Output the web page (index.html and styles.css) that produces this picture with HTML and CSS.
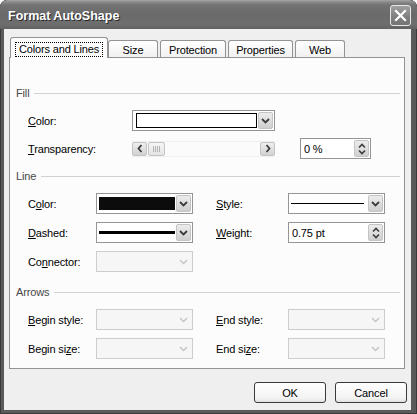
FILE: index.html
```html
<!DOCTYPE html>
<html>
<head>
<meta charset="utf-8">
<title>Format AutoShape</title>
<link rel="stylesheet" href="styles.css">
</head>
<body>
<div class="window">
  <div class="titlebar">
    <span class="title">Format AutoShape</span>
    <span class="close"><svg width="19" height="19" viewBox="0 0 19 19"><path d="M5 5L14 14M14 5L5 14" stroke="#fff" stroke-width="2.2" stroke-linecap="square"/></svg></span>
  </div>
  <div class="frame">
    <div class="client">
      <div class="tabs">
        <div class="tab active w98"><span class="focus">Colors and Lines</span></div>
        <div class="tab w50">Size</div>
        <div class="tab w66">Protection</div>
        <div class="tab w65">Properties</div>
        <div class="tab w50">Web</div>
      </div>
      <div class="panel">
        <div class="group"><span>Fill</span><i class="rule"></i></div>
        <div class="row fill-row first">
          <span class="lbl"><u>C</u>olor:</span>
          <div class="combo">
            <span class="val"><span class="swatch-white"></span></span>
            <span class="dd"><svg width="9" height="6" viewBox="0 0 9 6"><path d="M1 1l3.5 3.5L8 1" fill="none" stroke="#3c3c3c" stroke-width="1.8"/></svg></span>
          </div>
        </div>
        <div class="row fill-row">
          <span class="lbl"><u>T</u>ransparency:</span>
          <div class="scroll">
            <span class="sbtn"><svg width="6" height="9" viewBox="0 0 6 9"><path d="M4.5 1L1.5 4.5L4.5 8" fill="none" stroke="#3c3c3c" stroke-width="1.8"/></svg></span>
            <span class="thumb"><svg width="7" height="6" viewBox="0 0 7 6"><path d="M0.5 0v6M2.5 0v6M4.5 0v6M6.5 0v6" stroke="#b4b4b4" stroke-width="1"/></svg></span>
            <span class="track"></span>
            <span class="sbtn"><svg width="6" height="9" viewBox="0 0 6 9"><path d="M1.5 1L4.5 4.5L1.5 8" fill="none" stroke="#3c3c3c" stroke-width="1.8"/></svg></span>
          </div>
          <span></span>
          <div class="spin">
            <span class="spin-text">0 %</span>
            <span class="spin-btn"><svg width="8" height="12" viewBox="0 0 8 12"><path d="M1 4.5l3-3 3 3M1 7.5l3 3 3-3" fill="none" stroke="#3c3c3c" stroke-width="1.6"/></svg></span>
          </div>
        </div>

        <div class="group line-group"><span>Line</span><i class="rule"></i></div>
        <div class="row line-row first">
          <span class="lbl">C<u>o</u>lor:</span>
          <div class="combo">
            <span class="val"><span class="swatch-black"></span></span>
            <span class="dd"><svg width="9" height="6" viewBox="0 0 9 6"><path d="M1 1l3.5 3.5L8 1" fill="none" stroke="#3c3c3c" stroke-width="1.8"/></svg></span>
          </div>
          <span></span>
          <span class="lbl"><u>S</u>tyle:</span>
          <div class="combo">
            <span class="val line-val"><span class="thin-line"></span></span>
            <span class="dd"><svg width="9" height="6" viewBox="0 0 9 6"><path d="M1 1l3.5 3.5L8 1" fill="none" stroke="#3c3c3c" stroke-width="1.8"/></svg></span>
          </div>
        </div>
        <div class="row line-row">
          <span class="lbl"><u>D</u>ashed:</span>
          <div class="combo">
            <span class="val line-val"><span class="thick-line"></span></span>
            <span class="dd"><svg width="9" height="6" viewBox="0 0 9 6"><path d="M1 1l3.5 3.5L8 1" fill="none" stroke="#3c3c3c" stroke-width="1.8"/></svg></span>
          </div>
          <span></span>
          <span class="lbl"><u>W</u>eight:</span>
          <div class="spin">
            <span class="spin-text">0.75 pt</span>
            <span class="spin-btn"><svg width="8" height="12" viewBox="0 0 8 12"><path d="M1 4.5l3-3 3 3M1 7.5l3 3 3-3" fill="none" stroke="#3c3c3c" stroke-width="1.6"/></svg></span>
          </div>
        </div>
        <div class="row line-row">
          <span class="lbl">Co<u>n</u>nector:</span>
          <div class="combo disabled">
            <span class="val"></span>
            <span class="dd"><svg width="9" height="6" viewBox="0 0 9 6"><path d="M1 1l3.5 3.5L8 1" fill="none" stroke="#c4c4c4" stroke-width="1.4"/></svg></span>
          </div>
        </div>

        <div class="group arrows-group"><span>Arrows</span><i class="rule"></i></div>
        <div class="row line-row first">
          <span class="lbl"><u>B</u>egin style:</span>
          <div class="combo disabled">
            <span class="val"></span>
            <span class="dd"><svg width="9" height="6" viewBox="0 0 9 6"><path d="M1 1l3.5 3.5L8 1" fill="none" stroke="#c4c4c4" stroke-width="1.4"/></svg></span>
          </div>
          <span></span>
          <span class="lbl"><u>E</u>nd style:</span>
          <div class="combo disabled">
            <span class="val"></span>
            <span class="dd"><svg width="9" height="6" viewBox="0 0 9 6"><path d="M1 1l3.5 3.5L8 1" fill="none" stroke="#c4c4c4" stroke-width="1.4"/></svg></span>
          </div>
        </div>
        <div class="row line-row">
          <span class="lbl">Begin si<u>z</u>e:</span>
          <div class="combo disabled">
            <span class="val"></span>
            <span class="dd"><svg width="9" height="6" viewBox="0 0 9 6"><path d="M1 1l3.5 3.5L8 1" fill="none" stroke="#c4c4c4" stroke-width="1.4"/></svg></span>
          </div>
          <span></span>
          <span class="lbl">End si<u>z</u>e:</span>
          <div class="combo disabled">
            <span class="val"></span>
            <span class="dd"><svg width="9" height="6" viewBox="0 0 9 6"><path d="M1 1l3.5 3.5L8 1" fill="none" stroke="#c4c4c4" stroke-width="1.4"/></svg></span>
          </div>
        </div>
      </div>
      <div class="actions">
        <button class="btn">OK</button>
        <button class="btn">Cancel</button>
      </div>
    </div>
  </div>
</div>
</body>
</html>
```

FILE: styles.css
```css
html, body {
  margin: 0;
  padding: 0;
  background: #ffffff;
}

body {
  font-family: "Liberation Sans", Arial, sans-serif;
  font-size: 11px;
  letter-spacing: -0.15px;
  color: #000;
}

.window {
  width: 417px;
  height: 414px;
  display: flex;
  flex-direction: column;
  background: #5a5a5a;
  border-radius: 7px 7px 0 0;
  overflow: hidden;
  box-shadow: inset 0 0 0 1px #3a3a3a;
}

.titlebar {
  height: 29px;
  box-sizing: border-box;
  flex: none;
  display: flex;
  align-items: center;
  justify-content: space-between;
  padding: 2px 6px 0 8px;
  background: linear-gradient(#a6a6a6 0, #8a8a8a 2px, #737373 5px, #6a6a6a 14px, #6e6e6e 24px, #626262 29px);
  border-radius: 7px 7px 0 0;
}

.title {
  color: #ffffff;
  font-weight: bold;
  font-size: 12.5px;
  letter-spacing: 0;
  text-shadow: 1px 1px 0 #2a2a2a;
}

.close {
  width: 21px;
  height: 21px;
  box-sizing: border-box;
  border: 1px solid #e8e8e8;
  border-radius: 3px;
  background: linear-gradient(#a0a0a0, #7e7e7e 60%, #747474);
  display: flex;
  align-items: center;
  justify-content: center;
}

.frame {
  flex: 1;
  display: flex;
  padding: 0 6px 4px 4px;
}

.client {
  flex: 1;
  background: #efefef;
  display: flex;
  flex-direction: column;
  padding: 8px 4px 0 0;
}

.tabs {
  display: flex;
  align-items: flex-end;
  height: 20px;
  margin-left: 6px;
}

.tab {
  height: 17px;
  box-sizing: border-box;
  border: 1px solid #939393;
  border-bottom: none;
  border-radius: 3px 3px 0 0;
  background: linear-gradient(#ffffff, #f1f1f1);
  display: flex;
  align-items: center;
  justify-content: center;
  margin-right: 2px;
  padding-top: 1px;
}

.tab.active {
  height: 21px;
  margin-bottom: -1px;
  margin-right: 0;
  position: relative;
  z-index: 1;
  background: #fcfcfc;
  padding-top: 3px;
}

.focus {
  border: 1px dotted #000;
  padding: 0 3px 1px 3px;
}

.w98 { width: 98px; }
.w50 { width: 50px; }
.w66 { width: 66px; }
.w65 { width: 65px; }

.panel {
  margin-left: 5px;
  width: 396px;
  height: 312px;
  box-sizing: border-box;
  border: 1px solid #939393;
  background: #fcfcfc;
  padding: 28px 4px 0 6px;
}

.group {
  display: flex;
  align-items: center;
  gap: 5px;
  height: 14px;
  color: #474747;
}

.rule {
  flex: 1;
  height: 1px;
  background: #d2d2d2;
}

.line-group { margin-top: 10px; }
.arrows-group { margin-top: 13px; }

.row {
  display: grid;
  height: 21px;
  padding-left: 12px;
  align-items: center;
  margin-top: 8px;
}

.row.first { margin-top: 10px; }
.fill-row + .fill-row { margin-top: 7px; }

.fill-row { grid-template-columns: 104px 143px 25px 71px; }
.line-row { grid-template-columns: 68px 97px 23px 72px 97px; }

.lbl u { text-decoration: underline; text-underline-offset: 1px; }

.combo {
  height: 21px;
  box-sizing: border-box;
  border: 1px solid #959595;
  background: #ffffff;
  display: flex;
  padding: 1px;
}

.val {
  flex: 1;
  display: flex;
  margin: 1px 1px 1px 2px;
}

.line-row .val { margin-left: 1px; }

.swatch-white {
  flex: 1;
  border: 1px solid #000;
  background: #fff;
}

.swatch-black {
  flex: 1;
  background: #0c0c0c;
  margin: 1px 0;
}

.line-val {
  align-items: center;
  margin-left: 1px;
}

.thin-line {
  flex: 1;
  height: 1px;
  background: #000;
  margin-right: 3px;
}

.thick-line {
  flex: 1;
  height: 3px;
  background: #000;
}

.dd {
  width: 15px;
  box-sizing: border-box;
  border: 1px solid #c4c4c4;
  border-radius: 2px;
  background: linear-gradient(#ececec, #cfcfcf);
  display: flex;
  align-items: center;
  justify-content: center;
}

.combo.disabled {
  border-color: #cdcdcd;
  background: #f6f6f6;
}

.combo.disabled .dd {
  border: none;
  background: none;
}

.scroll {
  height: 16px;
  display: flex;
  align-self: center;
  background: #fbfbfb;
  border-top: 1px solid #f0f0f0;
  border-bottom: 1px solid #f0f0f0;
  box-sizing: border-box;
}

.sbtn, .thumb {
  width: 15px;
  box-sizing: border-box;
  border: 1px solid #c4c4c4;
  border-radius: 2px;
  background: linear-gradient(#eeeeee, #d2d2d2);
  display: flex;
  align-items: center;
  justify-content: center;
}

.thumb {
  width: 17px;
  margin-left: 1px;
  background: linear-gradient(#f6f6f6, #e4e4e4);
}

.track { flex: 1; }

.spin {
  height: 21px;
  box-sizing: border-box;
  border: 1px solid #959595;
  background: #ffffff;
  display: flex;
  align-items: center;
  padding: 1px 1px 1px 3px;
}

.spin-text { flex: 1; }

.spin-btn {
  width: 15px;
  height: 17px;
  box-sizing: border-box;
  border: 1px solid #c4c4c4;
  border-radius: 2px;
  background: linear-gradient(#ececec, #cfcfcf);
  display: flex;
  align-items: center;
  justify-content: center;
}

.actions {
  display: flex;
  justify-content: flex-end;
  gap: 9px;
  margin-top: 13px;
}

.btn {
  width: 72px;
  height: 21px;
  box-sizing: border-box;
  border: 1px solid #3a3a3a;
  border-radius: 3px;
  background: linear-gradient(#ffffff, #f3f3f3 80%, #e2e2e2);
  font-family: "Liberation Sans", Arial, sans-serif;
  font-size: 11px;
  letter-spacing: -0.15px;
  color: #000;
  padding: 0;
}
```
